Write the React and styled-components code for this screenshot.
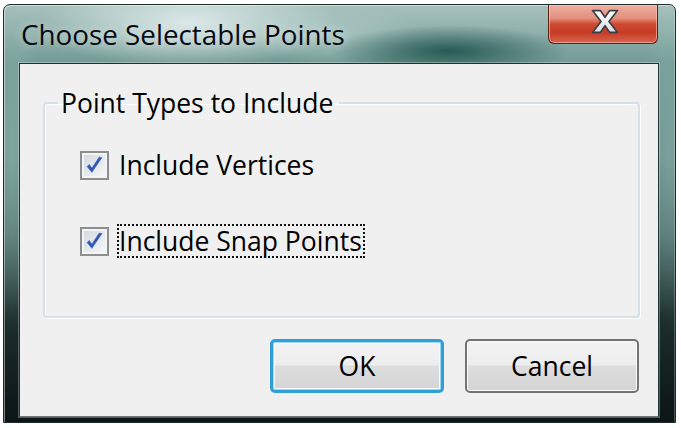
import styled, { createGlobalStyle } from "styled-components"

const Global = createGlobalStyle`
  html, body {
    margin: 0;
    padding: 0;
    background: #ffffff;
    width: 681px;
    height: 428px;
    overflow: hidden;
  }
  body {
    font-family: "Open Sans", "Noto Sans", sans-serif;
    color: #000;
  }
`

const Window = styled.div`
  box-sizing: border-box;
  margin: 4px 0 0 3px;
  width: 673px;
  height: 419px;
  display: flex;
  flex-direction: column;
  padding: 0 16px 5px 15px;
  border: 1px solid #1f2b2a;
  border-radius: 7px 7px 0 0;
  box-shadow: inset 1px 1px 0 rgba(255, 255, 255, 0.45), inset -1px 0 0 rgba(255, 255, 255, 0.25);
  background:
    radial-gradient(ellipse 150px 45px at 185px 18px, rgba(236, 246, 245, 0.8), rgba(236, 246, 245, 0)),
    radial-gradient(ellipse 120px 26px at 445px 46px, rgba(18, 72, 66, 0.8), rgba(18, 72, 66, 0)),
    radial-gradient(ellipse 90px 30px at 330px 30px, rgba(190, 215, 212, 0.5), rgba(190, 215, 212, 0)),
    radial-gradient(ellipse 30px 180px at 8px 150px, rgba(150, 185, 180, 0.5), rgba(150, 185, 180, 0)),
    radial-gradient(ellipse 30px 180px at 666px 150px, rgba(150, 185, 180, 0.4), rgba(150, 185, 180, 0)),
    linear-gradient(to bottom, #a7c1bd 0px, #8fb0ab 28px, #729a94 58px, #6a908a 150px, #4f726d 230px, #1c2f2d 310px, #0b1515 100%);
`

const TitleBar = styled.div`
  height: 58px;
  flex: none;
  display: flex;
  justify-content: space-between;
  align-items: flex-start;
`

const Title = styled.div`
  margin: 10px 0 0 2px;
  font-size: 27.8px;
  line-height: 38px;
  color: #0a0a14;
  text-shadow: 0 0 10px rgba(255, 255, 255, 0.6);
`

const CloseButton = styled.div`
  width: 110px;
  height: 39px;
  margin-right: 1px;
  box-sizing: border-box;
  display: flex;
  justify-content: center;
  padding: 4px 0 0 4px;
  border: 1px solid #5c1f16;
  border-top: none;
  border-radius: 0 0 6px 6px;
  box-shadow: inset 0 0 0 1px rgba(255, 210, 200, 0.55);
  background: linear-gradient(to bottom, #eeb0a2 0%, #e28f7c 35%, #cf4a32 50%, #c73b24 72%, #d7654f 100%);
`

const Client = styled.div`
  flex: 1;
  display: flex;
  flex-direction: column;
  padding: 21px 18px 23px 23px;
  background: #f0f0f0;
  border: 1px solid #1c3431;
  border-bottom-color: #6f7576;
  box-shadow: 0 0 0 1px rgba(255, 255, 255, 0.3);
`

const GroupBox = styled.fieldset`
  margin: 0;
  height: 233px;
  box-sizing: border-box;
  padding: 27px 10px 0 13px;
  border: 2px solid #d6e1e7;
  border-radius: 4px;
  box-shadow: inset 1px 1px 0 #ffffff, 1px 1px 0 #ffffff;
  display: flex;
  flex-direction: column;
  gap: 42px;
`

const Legend = styled.legend`
  margin-left: 0;
  padding: 0 6px 0 3px;
  font-size: 26.5px;
  line-height: 36px;
`

const Row = styled.div`
  display: flex;
  align-items: center;
  gap: 8px;
  margin-left: 22px;
`

const Box = styled.span`
  width: 29px;
  height: 29px;
  box-sizing: border-box;
  border: 2px solid #8c8e8f;
  background: linear-gradient(135deg, #cfd6df 0%, #e3e7ec 45%, #f7f8f9 100%);
  box-shadow: inset 0 0 0 2px #f4f4f4;
  display: flex;
  align-items: center;
  justify-content: center;
`

const Label = styled.span`
  font-size: 26.5px;
  line-height: 30px;
  border: 2px ${p => (p.$focused ? "dotted #111" : "solid transparent")};
  padding: 0 1px 0 0;
`

const ButtonRow = styled.div`
  margin-top: 21px;
  display: flex;
  justify-content: flex-end;
  gap: 21px;
  padding-right: 1px;
`

const Button = styled.div`
  width: 174px;
  height: 54px;
  box-sizing: border-box;
  display: flex;
  align-items: center;
  justify-content: center;
  font-size: 26.5px;
  border-radius: 5px;
  border: ${p => (p.$default ? "3px solid #2f9fd6" : "2px solid #737373")};
  box-shadow: ${p =>
    p.$default
      ? "inset 0 0 0 1px #9fd8f2, inset 0 0 0 2px #f6fbfd"
      : "inset 0 0 0 1px #fbfbfb"};
  background: linear-gradient(to bottom, #f3f3f3 0%, #ededed 47%, #dddddd 51%, #d4d4d4 100%);
`

const Check = () => (
  <svg width="21" height="21" viewBox="0 0 20 20">
    <path
      d="M3 11 L7.5 16.5 L17 2.5 L14.5 2 L7.5 12.5 L5 9 Z"
      fill="#2f55b0"
      stroke="#4d6fc0"
      strokeWidth="0.8"
      strokeLinejoin="round"
    />
  </svg>
)

const CloseGlyph = () => (
  <svg width="30" height="25" viewBox="0 0 28 24">
    <defs>
      <linearGradient id="xg" x1="0" y1="0" x2="0" y2="1">
        <stop offset="0" stopColor="#ffffff" />
        <stop offset="1" stopColor="#d9dde2" />
      </linearGradient>
    </defs>
    <path
      d="M2 1.5 H9.5 L14 8 L18.5 1.5 H26 L17.8 12 L26 22.5 H18.5 L14 16 L9.5 22.5 H2 L10.2 12 Z"
      fill="url(#xg)"
      stroke="#3b3f46"
      strokeWidth="1.6"
      strokeLinejoin="round"
    />
  </svg>
)

const Option = ({ label, focused }) => (
  <Row>
    <Box>
      <Check />
    </Box>
    <Label $focused={focused}>{label}</Label>
  </Row>
)

const App = () => {
  return (
    <>
      <Global />
      <Window>
        <TitleBar>
          <Title>Choose Selectable Points</Title>
          <CloseButton>
            <CloseGlyph />
          </CloseButton>
        </TitleBar>
        <Client>
          <GroupBox>
            <Legend>Point Types to Include</Legend>
            <Option label="Include Vertices" />
            <Option label="Include Snap Points" focused />
          </GroupBox>
          <ButtonRow>
            <Button $default>OK</Button>
            <Button>Cancel</Button>
          </ButtonRow>
        </Client>
      </Window>
    </>
  )
}

export default App
